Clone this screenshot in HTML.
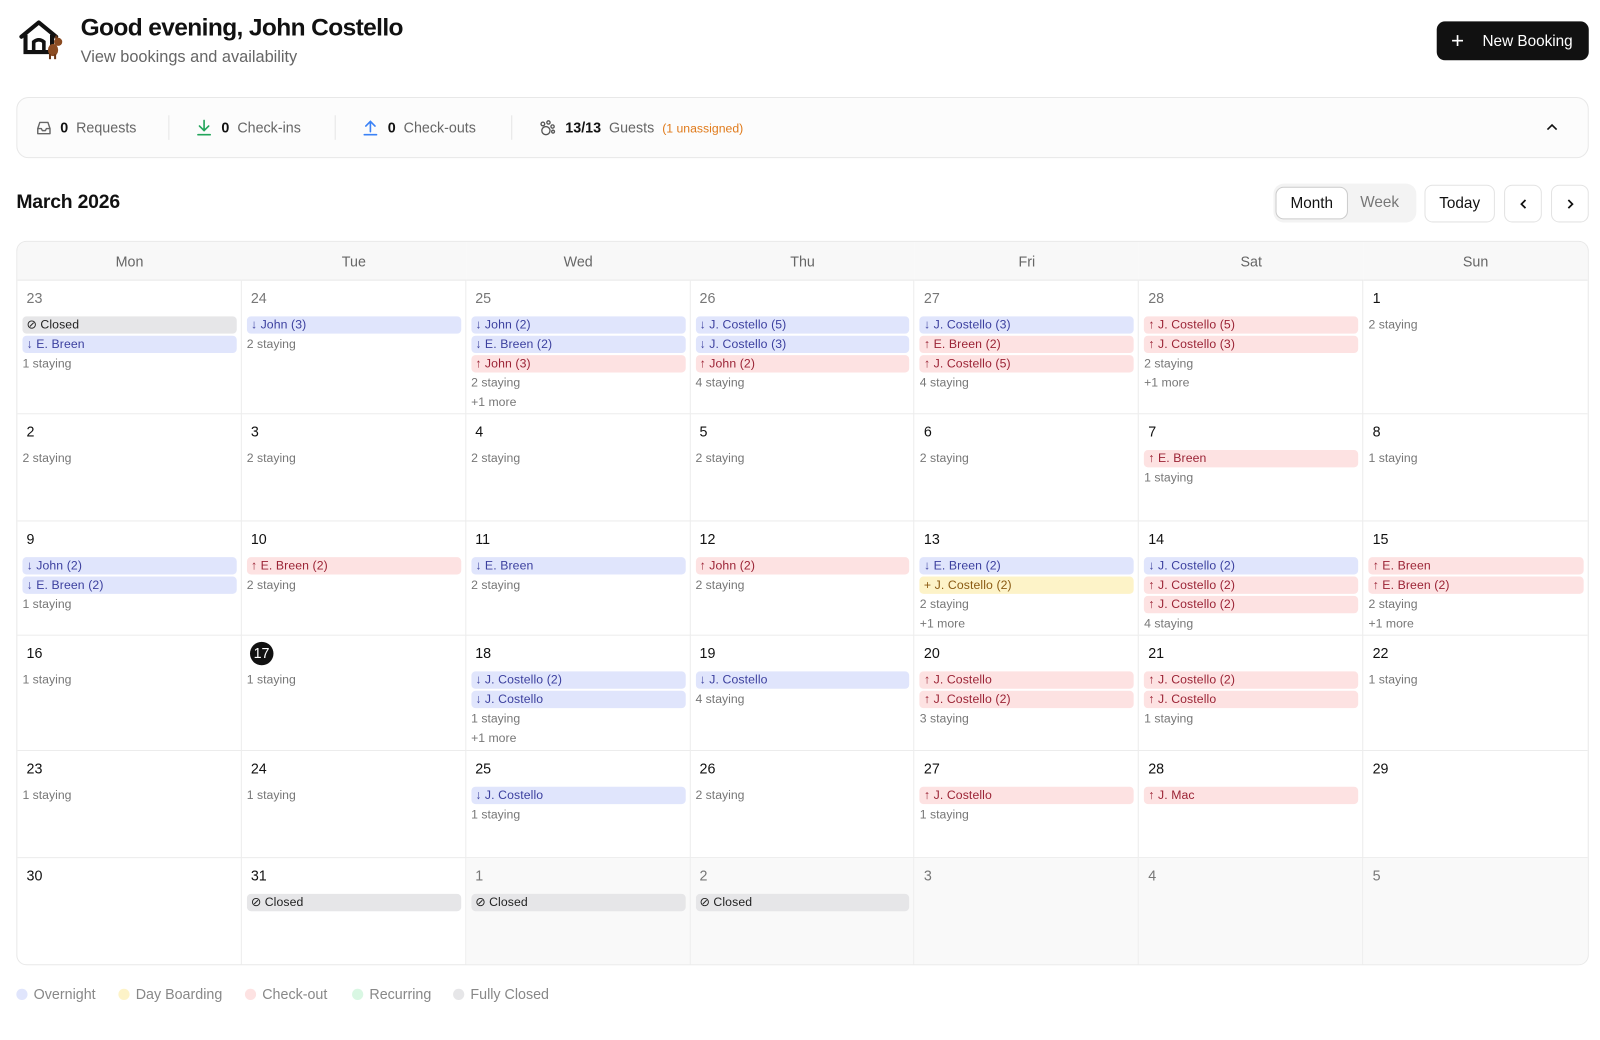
<!DOCTYPE html>
<html><head><meta charset="utf-8"><style>
*{box-sizing:border-box;margin:0;padding:0}
body{width:1600px;height:1040px;background:#fff;font-family:"Liberation Sans",sans-serif;color:#111;position:relative;overflow:hidden}
#w{position:absolute;left:0;top:0;width:1568px;height:1019px;transform:scale(1.0204);transform-origin:0 0}
.abs{position:absolute}
h1{position:absolute;left:79px;top:14px;font-size:24px;font-weight:700;letter-spacing:-0.6px}
.sub{left:79px;top:48px;font-size:16px;color:#666}
.btn{left:1408px;top:21px;width:149px;height:38px;background:#111;border-radius:8px;color:#fff;font-size:15px;display:flex;align-items:center;padding-left:14px}
.stats{left:16px;top:95px;width:1541px;height:60px;border:1px solid #e8e8e8;border-radius:12px;background:#fcfcfc;font-size:14px;color:#666}
.stats span{position:absolute;top:21px}
.stats b{color:#111}
.sep{position:absolute;top:17px;width:1px;height:24px;background:#e5e5e5}
.month{left:16px;top:188px;font-size:19px;font-weight:700;letter-spacing:-0.2px}
.seg{left:1248px;top:180px;width:140px;height:38px;background:#f3f3f3;border-radius:10px}
.sb{position:absolute;border:1px solid #e3e3e3;border-radius:8px;background:#fff;display:flex;align-items:center;justify-content:center;font-size:15px}
.grid{left:16px;top:236px;width:1541px;height:710px;border:1px solid #e8e8e8;border-radius:10px;overflow:hidden;background:#fff;display:grid;grid-template-columns:repeat(7,1fr);grid-template-rows:38px 131px 105px 112px 113px 105px 105px}
.hd{background:#f8f8f8;border-bottom:1px solid #e8e8e8;display:flex;align-items:center;justify-content:center;font-size:14px;color:#666}
.c{border-right:1px solid #ececec;border-bottom:1px solid #ececec;padding:9px 4px 0 5px;position:relative}
.c:nth-child(7n){border-right:none}
.c.last{border-bottom:none}
.d{font-size:14px;height:17px;line-height:17px;margin-left:4px;margin-bottom:9px;color:#111}
.dg{color:#777}
.fade{background:#f9f9f9}
.ch{height:17px;line-height:17px;border-radius:4px;font-size:12px;padding-left:4px;margin-bottom:2px;white-space:nowrap;letter-spacing:0.1px}
.b{background:#e0e5fc;color:#3b3f9e}
.r{background:#fde2e2;color:#9b2335}
.g{background:#e6e6e8;color:#222}
.y{background:#fdf3c8;color:#8a5a12}
.s{font-size:12px;color:#777;height:19px;line-height:17px}
.today{display:inline-block;width:23px;height:23px;border-radius:50%;background:#111;color:#fff;text-align:center;line-height:23px;margin-left:-1px;margin-top:-3px}
.leg{top:966px;font-size:14px;color:#888;display:flex;align-items:center}
.dot{display:inline-block;width:11px;height:11px;border-radius:50%;margin-right:6px}
</style></head><body><div id="w">
<svg class="abs" style="left:18px;top:18px" width="48" height="42" viewBox="0 0 48 42">
<path d="M3 18 L20 4 L37 18" fill="none" stroke="#111" stroke-width="4" stroke-linejoin="round" stroke-linecap="round"/>
<path d="M7 16 V33 H33 V16" fill="none" stroke="#111" stroke-width="4"/>
<path d="M15 33 V23 Q20 19 25 23 V33" fill="none" stroke="#111" stroke-width="3.5"/>
<ellipse cx="34" cy="31" rx="5" ry="6" fill="#8a4b22"/><circle cx="39" cy="23" r="4" fill="#8a4b22"/><path d="M35 20 l2 -4 2 3z" fill="#6b3617"/><rect x="30" y="35" width="2" height="5" fill="#6b3617"/><rect x="35" y="35" width="2" height="5" fill="#6b3617"/>
</svg>
<h1>Good evening, John Costello</h1>
<div class="abs sub">View bookings and availability</div>
<div class="abs btn"><span style="font-size:22px;font-weight:300;margin-right:18px;line-height:20px">+</span>New Booking</div>

<div class="abs stats">
<svg style="position:absolute;left:18px;top:22px" width="16" height="15" viewBox="0 0 16 15"><path d="M2 8 L4 2 H12 L14 8 V13 H2Z M2 8 H5.5 L6.5 10 H9.5 L10.5 8 H14" fill="none" stroke="#666" stroke-width="1.4" stroke-linejoin="round"/></svg>
<span style="left:42px"><b>0</b>&nbsp; Requests</span>
<div class="sep" style="left:148px"></div>
<svg style="position:absolute;left:175px;top:21px" width="16" height="17" viewBox="0 0 16 17"><path d="M8 1 V11 M3.5 6.5 L8 11 12.5 6.5 M2 15 H14" fill="none" stroke="#22a55a" stroke-width="1.6" stroke-linecap="round"/></svg>
<span style="left:200px"><b>0</b>&nbsp; Check-ins</span>
<div class="sep" style="left:311px"></div>
<svg style="position:absolute;left:338px;top:21px" width="16" height="17" viewBox="0 0 16 17"><path d="M8 12 V2 M3.5 6.5 L8 2 12.5 6.5 M2 15 H14" fill="none" stroke="#3b82f6" stroke-width="1.6" stroke-linecap="round"/></svg>
<span style="left:363px"><b>0</b>&nbsp; Check-outs</span>
<div class="sep" style="left:484px"></div>
<svg style="position:absolute;left:511px;top:21px" width="17" height="17" viewBox="0 0 17 17"><g fill="none" stroke="#555" stroke-width="1.3"><ellipse cx="7" cy="11" rx="4" ry="4"/><circle cx="4" cy="4.5" r="1.8"/><circle cx="9.5" cy="3" r="1.6"/><circle cx="13.5" cy="7" r="1.6"/><circle cx="14" cy="12" r="1.4"/></g></svg>
<span style="left:537px"><b>13/13</b>&nbsp; Guests &nbsp;<small style="color:#e07a1a;font-size:12px">(1 unassigned)</small></span>
<svg style="position:absolute;left:1498px;top:24px" width="12" height="10" viewBox="0 0 12 10"><path d="M1.5 7 L6 2.5 10.5 7" fill="none" stroke="#111" stroke-width="1.6"/></svg>
</div>

<div class="abs month">March 2026</div>
<div class="abs seg">
<div class="sb" style="left:2px;top:3px;width:71px;height:32px;border-color:#ccc">Month</div>
<div style="position:absolute;left:85px;top:10px;font-size:15px;color:#777">Week</div>
</div>
<div class="abs sb" style="left:1396px;top:181px;width:69px;height:37px">Today</div>
<div class="abs sb" style="left:1474px;top:181px;width:37px;height:37px"><svg width="10" height="12"><path d="M7 2 L3 6 7 10" fill="none" stroke="#111" stroke-width="1.7"/></svg></div>
<div class="abs sb" style="left:1520px;top:181px;width:37px;height:37px"><svg width="10" height="12"><path d="M3 2 L7 6 3 10" fill="none" stroke="#111" stroke-width="1.7"/></svg></div>

<div class="abs grid">
<div class="hd">Mon</div><div class="hd">Tue</div><div class="hd">Wed</div><div class="hd">Thu</div><div class="hd">Fri</div><div class="hd">Sat</div><div class="hd">Sun</div>

<div class="c"><div class="d dg">23</div><div class="ch g">⊘ Closed</div><div class="ch b">↓ E. Breen</div><div class="s">1 staying</div></div>
<div class="c"><div class="d dg">24</div><div class="ch b">↓ John (3)</div><div class="s">2 staying</div></div>
<div class="c"><div class="d dg">25</div><div class="ch b">↓ John (2)</div><div class="ch b">↓ E. Breen (2)</div><div class="ch r">↑ John (3)</div><div class="s">2 staying</div><div class="s">+1 more</div></div>
<div class="c"><div class="d dg">26</div><div class="ch b">↓ J. Costello (5)</div><div class="ch b">↓ J. Costello (3)</div><div class="ch r">↑ John (2)</div><div class="s">4 staying</div></div>
<div class="c"><div class="d dg">27</div><div class="ch b">↓ J. Costello (3)</div><div class="ch r">↑ E. Breen (2)</div><div class="ch r">↑ J. Costello (5)</div><div class="s">4 staying</div></div>
<div class="c"><div class="d dg">28</div><div class="ch r">↑ J. Costello (5)</div><div class="ch r">↑ J. Costello (3)</div><div class="s">2 staying</div><div class="s">+1 more</div></div>
<div class="c"><div class="d">1</div><div class="s">2 staying</div></div>

<div class="c"><div class="d">2</div><div class="s">2 staying</div></div>
<div class="c"><div class="d">3</div><div class="s">2 staying</div></div>
<div class="c"><div class="d">4</div><div class="s">2 staying</div></div>
<div class="c"><div class="d">5</div><div class="s">2 staying</div></div>
<div class="c"><div class="d">6</div><div class="s">2 staying</div></div>
<div class="c"><div class="d">7</div><div class="ch r">↑ E. Breen</div><div class="s">1 staying</div></div>
<div class="c"><div class="d">8</div><div class="s">1 staying</div></div>

<div class="c"><div class="d">9</div><div class="ch b">↓ John (2)</div><div class="ch b">↓ E. Breen (2)</div><div class="s">1 staying</div></div>
<div class="c"><div class="d">10</div><div class="ch r">↑ E. Breen (2)</div><div class="s">2 staying</div></div>
<div class="c"><div class="d">11</div><div class="ch b">↓ E. Breen</div><div class="s">2 staying</div></div>
<div class="c"><div class="d">12</div><div class="ch r">↑ John (2)</div><div class="s">2 staying</div></div>
<div class="c"><div class="d">13</div><div class="ch b">↓ E. Breen (2)</div><div class="ch y">+ J. Costello (2)</div><div class="s">2 staying</div><div class="s">+1 more</div></div>
<div class="c"><div class="d">14</div><div class="ch b">↓ J. Costello (2)</div><div class="ch r">↑ J. Costello (2)</div><div class="ch r">↑ J. Costello (2)</div><div class="s">4 staying</div></div>
<div class="c"><div class="d">15</div><div class="ch r">↑ E. Breen</div><div class="ch r">↑ E. Breen (2)</div><div class="s">2 staying</div><div class="s">+1 more</div></div>

<div class="c"><div class="d">16</div><div class="s">1 staying</div></div>
<div class="c"><div class="d"><span class="today">17</span></div><div class="s">1 staying</div></div>
<div class="c"><div class="d">18</div><div class="ch b">↓ J. Costello (2)</div><div class="ch b">↓ J. Costello</div><div class="s">1 staying</div><div class="s">+1 more</div></div>
<div class="c"><div class="d">19</div><div class="ch b">↓ J. Costello</div><div class="s">4 staying</div></div>
<div class="c"><div class="d">20</div><div class="ch r">↑ J. Costello</div><div class="ch r">↑ J. Costello (2)</div><div class="s">3 staying</div></div>
<div class="c"><div class="d">21</div><div class="ch r">↑ J. Costello (2)</div><div class="ch r">↑ J. Costello</div><div class="s">1 staying</div></div>
<div class="c"><div class="d">22</div><div class="s">1 staying</div></div>

<div class="c"><div class="d">23</div><div class="s">1 staying</div></div>
<div class="c"><div class="d">24</div><div class="s">1 staying</div></div>
<div class="c"><div class="d">25</div><div class="ch b">↓ J. Costello</div><div class="s">1 staying</div></div>
<div class="c"><div class="d">26</div><div class="s">2 staying</div></div>
<div class="c"><div class="d">27</div><div class="ch r">↑ J. Costello</div><div class="s">1 staying</div></div>
<div class="c"><div class="d">28</div><div class="ch r">↑ J. Mac</div></div>
<div class="c"><div class="d">29</div></div>

<div class="c last"><div class="d">30</div></div>
<div class="c last"><div class="d">31</div><div class="ch g">⊘ Closed</div></div>
<div class="c last fade"><div class="d dg">1</div><div class="ch g">⊘ Closed</div></div>
<div class="c last fade"><div class="d dg">2</div><div class="ch g">⊘ Closed</div></div>
<div class="c last fade"><div class="d dg">3</div></div>
<div class="c last fade"><div class="d dg">4</div></div>
<div class="c last fade"><div class="d dg">5</div></div>
</div>

<div class="abs leg" style="left:16px"><span class="dot" style="background:#e0e5fc"></span>Overnight</div>
<div class="abs leg" style="left:116px"><span class="dot" style="background:#fdf3c8"></span>Day Boarding</div>
<div class="abs leg" style="left:240px"><span class="dot" style="background:#fde2e2"></span>Check-out</div>
<div class="abs leg" style="left:345px"><span class="dot" style="background:#d9f7e3"></span>Recurring</div>
<div class="abs leg" style="left:444px"><span class="dot" style="background:#e6e6e8"></span>Fully Closed</div>
</div></body></html>
